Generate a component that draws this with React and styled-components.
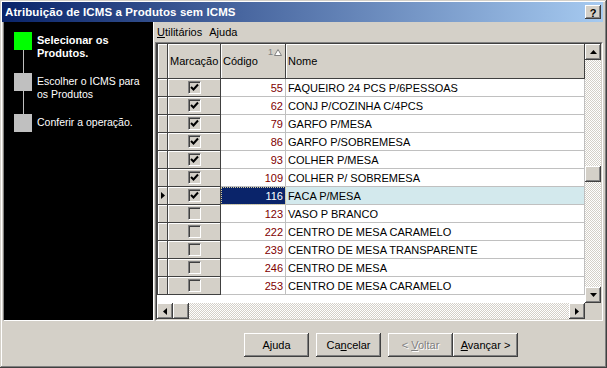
import React from 'react';
import styled, { createGlobalStyle } from 'styled-components';

const GlobalStyle = createGlobalStyle`
  html, body {
    margin: 0;
    padding: 0;
    background: #d4d0c8;
  }
  body {
    font-family: 'Liberation Sans', Arial, sans-serif;
    font-size: 11px;
    color: #000;
  }
  * {
    box-sizing: border-box;
  }
`;

const raised = `
  background: #d4d0c8;
  box-shadow: inset -1px -1px #404040, inset 1px 1px #fff,
    inset -2px -2px #808080, inset 2px 2px #d4d0c8;
`;

const checker = `
  background: repeating-conic-gradient(#d4d0c8 0 25%, #fff 0 50%) 0 0 / 2px 2px;
`;

const Window = styled.div`
  width: 607px;
  height: 368px;
  display: flex;
  flex-direction: column;
  padding: 2px 4px 3px 3px;
  background: #d4d0c8;
  box-shadow: inset -1px -1px #404040, inset 1px 1px #d4d0c8,
    inset -2px -2px #808080, inset 2px 2px #fff;
`;

const TitleBar = styled.div`
  height: 20px;
  margin-left: -1px;
  display: flex;
  align-items: center;
  padding: 0 2px 0 3px;
  background: linear-gradient(to right, #0a246a, #a6caf0);
  color: #fff;
  font-weight: bold;
  font-size: 11.5px;
  letter-spacing: 0.1px;
`;

const HelpButton = styled.div`
  ${raised}
  margin-left: auto;
  width: 16px;
  height: 14px;
  display: flex;
  align-items: center;
  justify-content: center;
  color: #000;
  font-weight: bold;
  font-size: 11px;
  letter-spacing: 0;
  padding-top: 1px;
`;

const Content = styled.div`
  height: 299px;
  display: flex;
`;

const StepsPanel = styled.div`
  width: 151px;
  background: #000;
  border-left: 1px solid #808080;
  border-right: 1px solid #fff;
  border-bottom: 1px solid #fff;
  padding: 10px 0 0 10px;
  display: flex;
  flex-direction: column;
  gap: 13px;
  position: relative;

  &::before {
    content: '';
    position: absolute;
    left: 19px;
    top: 28px;
    width: 1px;
    height: 82px;
    background: #c0c0c0;
  }
`;

const Step = styled.div`
  display: flex;
  gap: 5px;
  position: relative;
`;

const Marker = styled.div`
  flex: none;
  width: 18px;
  height: 18px;
  background: ${(p) => (p.$active ? '#00ff00' : '#c0c0c0')};
`;

const StepText = styled.div`
  margin-top: 2px;
  color: #fff;
  line-height: 13px;
  font-weight: ${(p) => (p.$active ? 'bold' : 'normal')};
  font-size: ${(p) => (p.$active ? '11px' : '10.5px')};
  width: 108px;
`;

const Main = styled.div`
  flex: 1;
  margin-left: 1px;
  display: flex;
  flex-direction: column;
`;

const MenuBar = styled.div`
  height: 20px;
  display: flex;
  align-items: center;
  gap: 7px;
  padding-left: 2px;
`;

const GridFrame = styled.div`
  flex: 1;
  border: 1px solid;
  border-color: #808080 #fff #fff #808080;
  display: flex;
`;

const GridInner = styled.div`
  flex: 1;
  border: 1px solid;
  border-color: #404040 #d4d0c8 #d4d0c8 #404040;
  display: grid;
  grid-template-columns: 1fr 16px;
  grid-template-rows: 1fr 16px;
`;

const DataView = styled.div`
  background: #fff;
  display: flex;
  flex-direction: column;
  overflow: hidden;
`;

const cols = `
  display: grid;
  grid-template-columns: 11px 53px 65px 1fr;
`;

const HeaderRow = styled.div`
  ${cols}
  height: 35px;
`;

const Row = styled.div`
  ${cols}
  height: 18px;
`;

const FixedCell = styled.div`
  background: #d4d0c8;
  border-right: 1px solid #404040;
  border-bottom: 1px solid #404040;
  border-left: ${(p) => (p.$first ? '1px solid #404040' : 'none')};
  box-shadow: inset 1px 1px #fff;
  display: flex;
  align-items: center;
  justify-content: ${(p) => (p.$center ? 'center' : 'flex-start')};
  padding-left: ${(p) => (p.$center ? '0' : '2px')};
  position: relative;
`;

const HeadCell = styled(FixedCell)`
  padding-top: 0;
`;

const SortMark = styled.div`
  position: absolute;
  top: 3px;
  right: 3px;
  display: flex;
  align-items: center;
  gap: 1px;
  color: #808080;
  font-size: 9px;
`;

const DataCell = styled.div`
  border-right: 1px solid #c0c0c0;
  border-bottom: 1px solid #c0c0c0;
  padding: 0 2px 0 2px;
  display: flex;
  align-items: center;
  justify-content: ${(p) => (p.$right ? 'flex-end' : 'flex-start')};
  color: ${(p) => p.$color || '#000'};
  background: ${(p) => p.$bg || '#fff'};
  outline: ${(p) => (p.$focus ? '1px dotted #d8d0a0' : 'none')};
  outline-offset: -1px;
  white-space: nowrap;
`;

const CheckBox = styled.div`
  width: 13px;
  height: 13px;
  border: 1px solid;
  border-color: #808080 #fff #fff #808080;
  box-shadow: inset 1px 1px #404040;
  display: flex;
  align-items: center;
  justify-content: center;
`;

const VScroll = styled.div`
  display: flex;
  flex-direction: column;
`;

const HScroll = styled.div`
  display: flex;
`;

const Track = styled.div`
  ${checker}
  flex: 1;
  display: flex;
  flex-direction: ${(p) => (p.$vertical ? 'column' : 'row')};
`;

const ScrollBox = styled.div`
  ${raised}
  flex: none;
  width: 16px;
  height: 16px;
  display: flex;
  align-items: center;
  justify-content: center;
`;

const Corner = styled.div`
  background: #d4d0c8;
`;

const Footer = styled.div`
  flex: 1;
  display: flex;
  justify-content: flex-end;
  align-items: flex-start;
  padding: 12px 85px 0 0;
  gap: 7px;
`;

const ButtonPair = styled.div`
  display: flex;
`;

const Button = styled.div`
  ${raised}
  width: 65px;
  height: 24px;
  display: flex;
  align-items: center;
  justify-content: center;
  color: ${(p) => (p.$disabled ? '#808080' : '#000')};
  text-shadow: ${(p) => (p.$disabled ? '1px 1px #fff' : 'none')};
`;

const Arrow = ({ dir }) => {
  const pts = {
    up: '0,4 7,4 3.5,0',
    down: '0,0 7,0 3.5,4',
    left: '4,0 4,7 0,3.5',
    right: '0,0 0,7 4,3.5',
  }[dir];
  const vertical = dir === 'up' || dir === 'down';
  return (
    <svg width={vertical ? 7 : 4} height={vertical ? 4 : 7} viewBox={vertical ? '0 0 7 4' : '0 0 4 7'}>
      <polygon points={pts} fill="#000" />
    </svg>
  );
};

const Check = () => (
  <svg width="9" height="9" viewBox="0 0 9 9">
    <polyline points="1,4 3.5,6.5 8,1.5" fill="none" stroke="#000" strokeWidth="2" />
  </svg>
);

const rows = [
  [55, 'FAQUEIRO 24 PCS P/6PESSOAS', true],
  [62, 'CONJ P/COZINHA C/4PCS', true],
  [79, 'GARFO P/MESA', true],
  [86, 'GARFO P/SOBREMESA', true],
  [93, 'COLHER P/MESA', true],
  [109, 'COLHER P/ SOBREMESA', true],
  [116, 'FACA P/MESA', true],
  [123, 'VASO P BRANCO', false],
  [222, 'CENTRO DE MESA CARAMELO', false],
  [239, 'CENTRO DE MESA TRANSPARENTE', false],
  [246, 'CENTRO DE MESA', false],
  [253, 'CENTRO DE MESA CARAMELO', false],
];

const current = 6;

const App = () => {
  return (
    <Window>
      <GlobalStyle />
      <TitleBar>
        Atribuição de ICMS a Produtos sem ICMS
        <HelpButton>?</HelpButton>
      </TitleBar>
      <Content>
        <StepsPanel>
          <Step>
            <Marker $active />
            <StepText $active>Selecionar os Produtos.</StepText>
          </Step>
          <Step>
            <Marker />
            <StepText>Escolher o ICMS para os Produtos</StepText>
          </Step>
          <Step>
            <Marker />
            <StepText>Conferir a operação.</StepText>
          </Step>
        </StepsPanel>
        <Main>
          <MenuBar>
            <span>
              <u>U</u>tilitários
            </span>
            <span>Ajuda</span>
          </MenuBar>
          <GridFrame>
            <GridInner>
              <DataView>
                <HeaderRow>
                  <HeadCell $first />
                  <HeadCell>Marcação</HeadCell>
                  <HeadCell>
                    Código
                    <SortMark>
                      1
                      <svg width="8" height="7" viewBox="0 0 8 7">
                        <polygon points="0.5,6.5 7.5,6.5 4,0.5" fill="#fff" stroke="#808080" strokeWidth="1" />
                      </svg>
                    </SortMark>
                  </HeadCell>
                  <HeadCell>Nome</HeadCell>
                </HeaderRow>
                {rows.map(([code, name, marked], i) => (
                  <Row key={code}>
                    <FixedCell $first $center>
                      {i === current && <Arrow dir="right" />}
                    </FixedCell>
                    <FixedCell $center>
                      <CheckBox>{marked && <Check />}</CheckBox>
                    </FixedCell>
                    <DataCell
                      $right
                      $color={i === current ? '#fff' : '#800000'}
                      $bg={i === current ? '#0a246a' : undefined}
                      $focus={i === current}
                    >
                      {code}
                    </DataCell>
                    <DataCell $bg={i === current ? '#d3e9ed' : undefined}>{name}</DataCell>
                  </Row>
                ))}
              </DataView>
              <VScroll>
                <ScrollBox>
                  <Arrow dir="up" />
                </ScrollBox>
                <Track $vertical>
                  <ScrollBox style={{ marginTop: 106 }} />
                </Track>
                <ScrollBox>
                  <Arrow dir="down" />
                </ScrollBox>
              </VScroll>
              <HScroll>
                <ScrollBox>
                  <Arrow dir="left" />
                </ScrollBox>
                <ScrollBox />
                <Track />
                <ScrollBox>
                  <Arrow dir="right" />
                </ScrollBox>
              </HScroll>
              <Corner />
            </GridInner>
          </GridFrame>
        </Main>
      </Content>
      <Footer>
        <Button>
          <span>
            A<u>j</u>uda
          </span>
        </Button>
        <Button>
          <span>
            Ca<u>n</u>celar
          </span>
        </Button>
        <ButtonPair>
          <Button $disabled>
            <span>
              &lt; <u>V</u>oltar
            </span>
          </Button>
          <Button>
            <span>
              <u>A</u>vançar &gt;
            </span>
          </Button>
        </ButtonPair>
      </Footer>
    </Window>
  );
};

export default App;
